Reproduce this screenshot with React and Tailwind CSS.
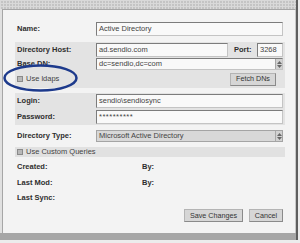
import React from "react";

const inputCls =
  "h-[14px] border border-[#c4c4c4] border-t-[#7c7c7c] border-l-[#7c7c7c] bg-[#f9f9f9] px-[2px] flex items-center text-[#444] font-normal";

function Spinner() {
  return (
    <div className="ml-auto w-[7px] h-full border-l border-[#a8a8a8] bg-[#d2d2d2] flex flex-col items-center justify-center gap-[1px]">
      <svg width="5" height="3" viewBox="0 0 5 3">
        <path d="M0 3 L2.5 0 L5 3 Z" fill="#666" />
      </svg>
      <svg width="5" height="3" viewBox="0 0 5 3">
        <path d="M0 0 L2.5 3 L5 0 Z" fill="#666" />
      </svg>
    </div>
  );
}

function Checkbox() {
  return <div className="w-[6px] h-[6px] border border-[#8a8a8a] bg-[#b8b8b8]" />;
}

function Button({ children, w }) {
  return (
    <div
      className={`${w} h-[13px] border border-[#b4b4b4] border-b-[#8a8a8a] border-r-[#8a8a8a] bg-[#d6d6d6] flex items-center justify-center text-[#333] text-[7.2px]`}
    >
      {children}
    </div>
  );
}

export default function App() {
  return (
    <div
      className="relative w-[300px] h-[243px] bg-[#ececec] overflow-hidden text-[7.5px] leading-none text-[#2e2e2e]"
      style={{ fontFamily: '"Liberation Sans", Arial, sans-serif' }}
    >
      <div className="w-[298px] border-r-2 border-[#5e5e5e] flex flex-col">
        {/* top strip */}
        <div className="h-[9px] bg-[#c4c4c4] bg-[linear-gradient(90deg,#d9d9d9_1px,transparent_1px),linear-gradient(#d9d9d9_1px,transparent_1px)] bg-[size:3px_3px]" />

        <div className="flex bg-[#e0e0e0]">
          <div className="ml-[2px] w-[294px] h-[224px] border-l border-t border-r border-[#a6a6a6] border-r-[#c8c8c8] bg-[#f3f3f3] pl-[12px] pt-[12px] flex flex-col">
            {/* name */}
            <div className="w-[270px] px-[2px] h-[14px] flex items-center">
              <div className="w-[79px] font-bold">Name:</div>
              <div className={`${inputCls} w-[187px]`}>Active Directory</div>
            </div>

            {/* host section */}
            <div className="w-[270px] mt-[6px] bg-[#e3e3e3] px-[2px] pt-[1px] pb-[2px] flex flex-col">
              <div className="h-[14px] flex items-center">
                <div className="w-[79px] font-bold">Directory Host:</div>
                <div className={`${inputCls} w-[132px]`}>ad.sendio.com</div>
                <div className="ml-[6px] w-[23px] font-bold">Port:</div>
                <div className={`${inputCls} w-[26px]`}>3268</div>
              </div>
              <div className="mt-[1px] h-[12px] flex items-center">
                <div className="w-[79px] font-bold">Base DN:</div>
                <div className={`${inputCls} !h-[12px] w-[187px] !pr-0`}>
                  <span>dc=sendio,dc=com</span>
                  <Spinner />
                </div>
              </div>
              <div className="mt-[2px] h-[14px] flex items-center">
                <Checkbox />
                <span className="ml-[3px] text-[#444]">Use ldaps</span>
                <div className="ml-auto mr-[7px]">
                  <Button w="w-[46px]">Fetch DNs</Button>
                </div>
              </div>
            </div>

            {/* login section */}
            <div className="w-[270px] mt-[5px] bg-[#e3e3e3] px-[2px] py-[1px] flex flex-col gap-[2px]">
              <div className="h-[14px] flex items-center">
                <div className="w-[79px] font-bold">Login:</div>
                <div className={`${inputCls} w-[187px]`}>sendio\sendiosync</div>
              </div>
              <div className="h-[14px] flex items-center">
                <div className="w-[79px] font-bold">Password:</div>
                <div className={`${inputCls} w-[187px] tracking-[0.5px]`}>**********</div>
              </div>
            </div>

            {/* directory type */}
            <div className="w-[270px] mt-[5px] px-[2px] h-[12px] flex items-center">
              <div className="w-[79px] font-bold">Directory Type:</div>
              <div className="w-[187px] h-[12px] border border-[#a4a4a4] bg-[#d8d8d8] pl-[2px] flex items-center text-[#444]">
                <span>Microsoft Active Directory</span>
                <Spinner />
              </div>
            </div>

            {/* custom queries */}
            <div className="w-[270px] mt-[5px] h-[10px] bg-[#e1e1e1] px-[2px] flex items-center">
              <Checkbox />
              <span className="ml-[3px] text-[#444]">Use Custom Queries</span>
            </div>

            {/* meta */}
            <div className="w-[270px] mt-[4px] px-[2px] h-[12px] flex items-center font-bold">
              <div className="w-[125px]">Created:</div>
              <div>By:</div>
            </div>
            <div className="w-[270px] mt-[4px] px-[2px] h-[12px] flex items-center font-bold">
              <div className="w-[125px]">Last Mod:</div>
              <div>By:</div>
            </div>
            <div className="w-[270px] mt-[3px] px-[2px] h-[12px] flex items-center font-bold">
              <div>Last Sync:</div>
            </div>

            {/* buttons */}
            <div className="w-[270px] mt-[5px] px-[2px] flex justify-end gap-[6px]">
              <Button w="w-[59px]">Save Changes</Button>
              <Button w="w-[34px]">Cancel</Button>
            </div>
          </div>
        </div>

        {/* bottom strip */}
        <div className="h-[7px] bg-[#a6a6a6]" />
      </div>

      {/* annotation oval */}
      <svg className="absolute left-0 top-0" width="300" height="243" viewBox="0 0 300 243">
        <ellipse cx="40.5" cy="78" rx="36" ry="12.5" fill="none" stroke="#1d3a8c" strokeWidth="2.5" />
      </svg>
    </div>
  );
}
